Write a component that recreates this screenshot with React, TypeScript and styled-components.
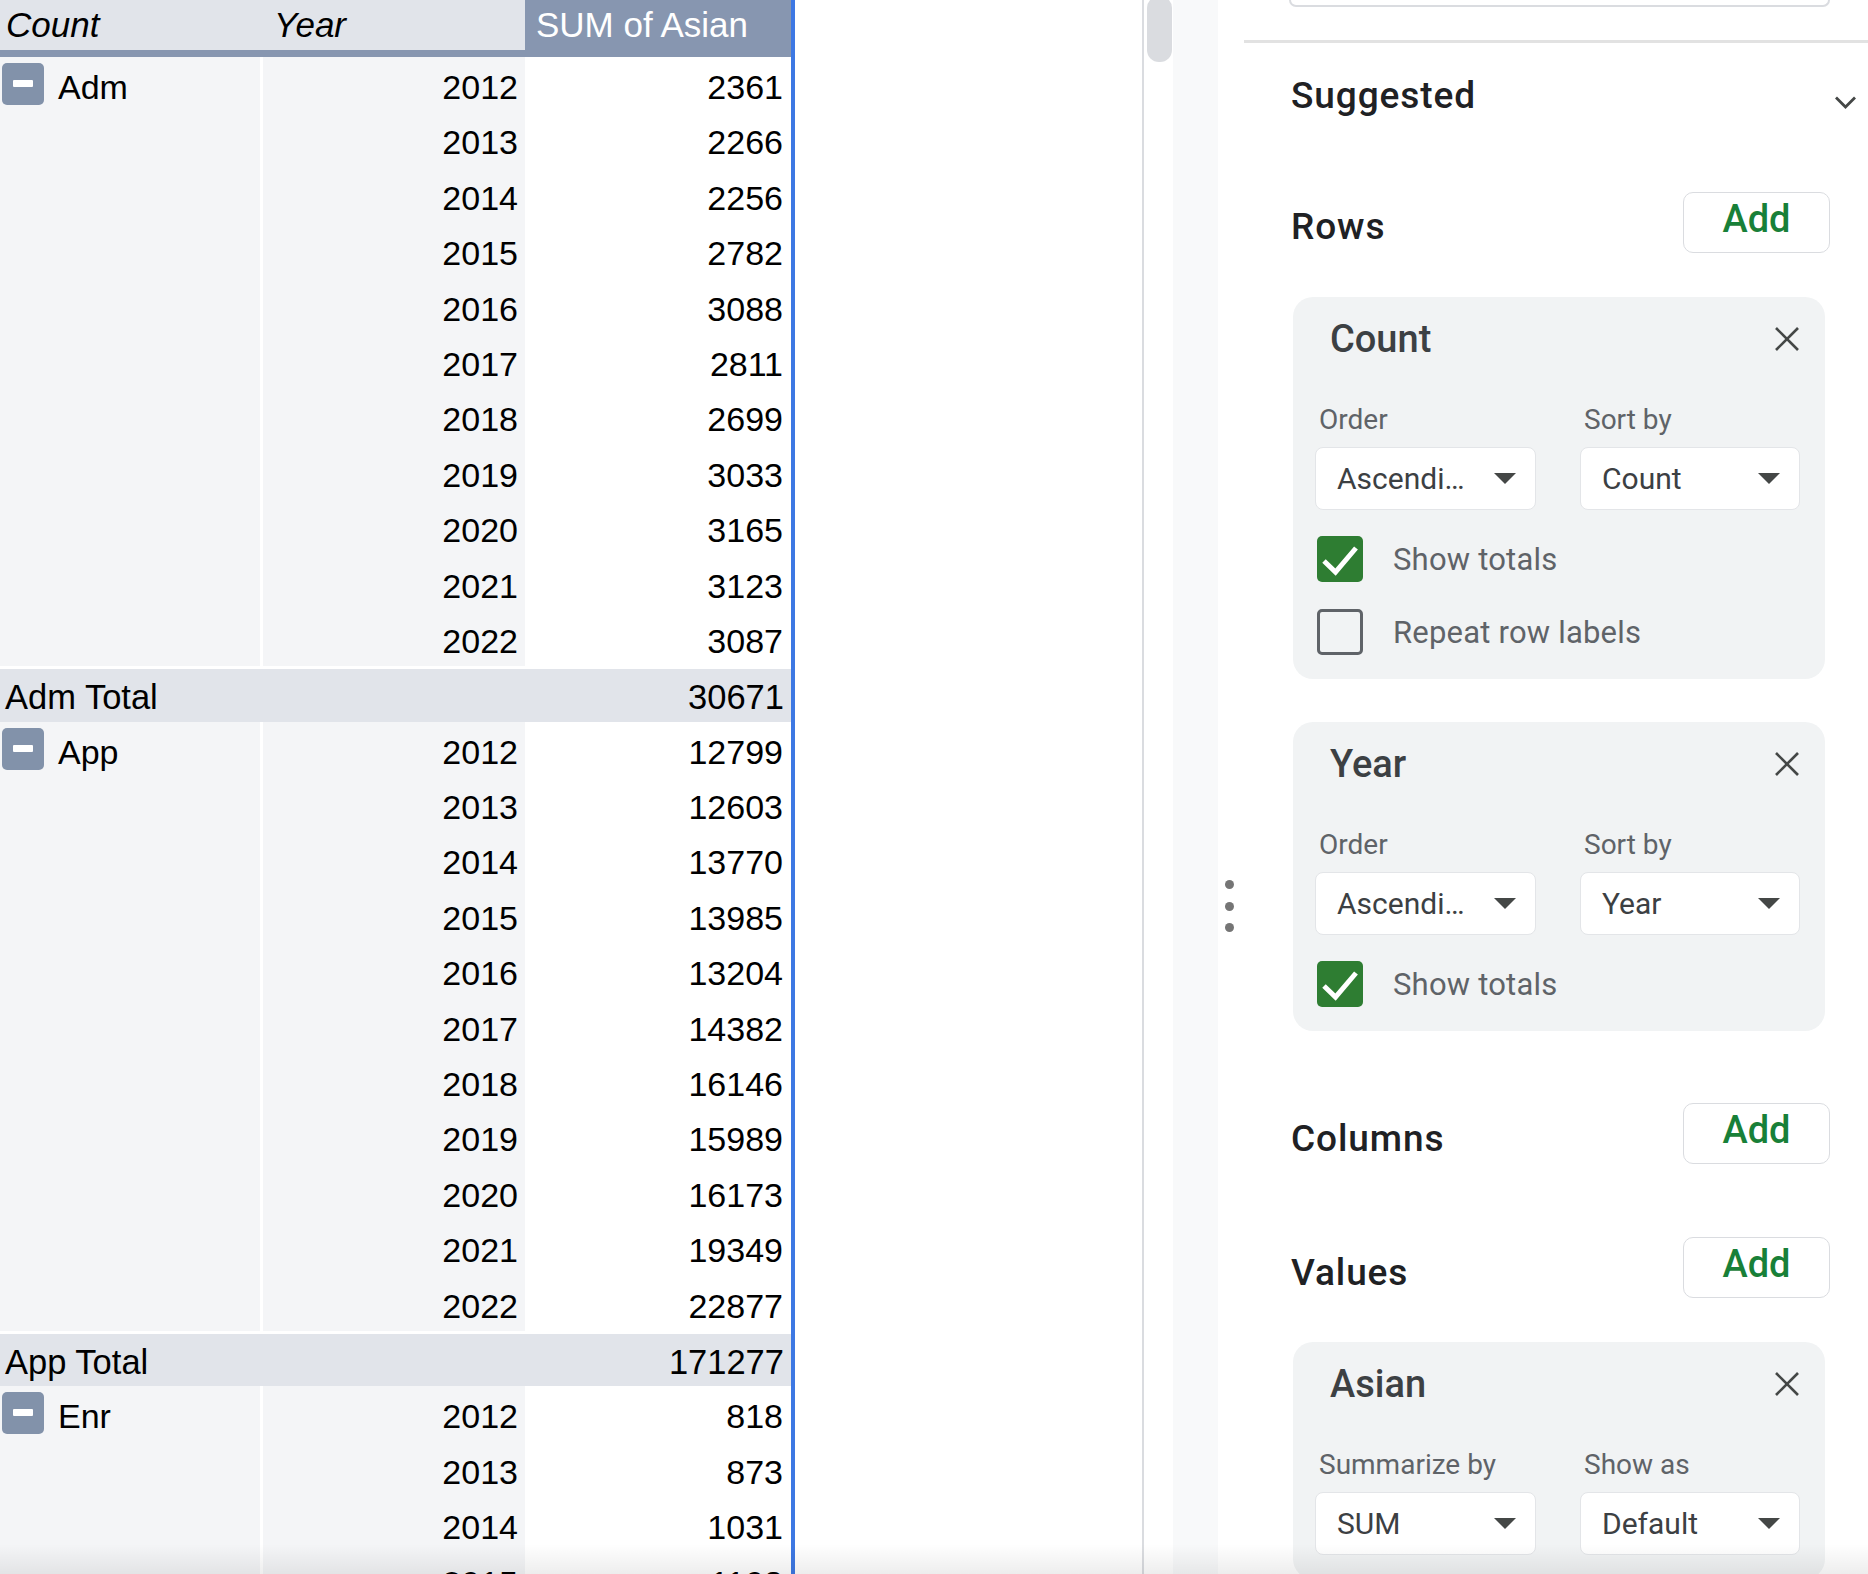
import React from 'react';
import styled, { createGlobalStyle } from 'styled-components';

const GlobalStyle = createGlobalStyle`
  html, body { margin: 0; padding: 0; background: #fff; }
  body { overflow: hidden; }
  *, *::before, *::after { box-sizing: border-box; }
`;

const Page = styled.div`
  position: relative;
  display: flex;
  width: 1868px;
  height: 1574px;
  overflow: hidden;
  background: #fff;
`;

const SheetArea = styled.div`
  width: 1142px;
  flex: none;
  overflow: hidden;
  background: #fff;
`;

const Pivot = styled.div`
  width: 795px;
  border-right: 4px solid #3d78e3;
  font-family: "Liberation Sans", Arial, sans-serif;
  font-size: 34px;
  color: #000;
`;

const HeaderRow = styled.div`
  display: grid;
  grid-template-columns: 263px 262px 266px;
  height: 57px;
  border-bottom: 7px solid #8796b0;
`;

const HeaderCell = styled.div<{ $accent?: boolean; $pad: number }>`
  background: ${(p) => (p.$accent ? '#8796b0' : '#e1e4ea')};
  color: ${(p) => (p.$accent ? '#fff' : '#000')};
  font-style: ${(p) => (p.$accent ? 'normal' : 'italic')};
  font-size: 35px;
  line-height: 50px;
  padding-left: ${(p) => p.$pad}px;
  white-space: nowrap;
`;

const DataRow = styled.div`
  display: grid;
  grid-template-columns: 263px 262px 266px;
  height: 55.4px;
`;

const GroupCell = styled.div`
  display: flex;
  align-items: flex-start;
  background: #f4f5f7;
  border-right: 3px solid #fff;
`;

const ToggleBox = styled.span`
  display: flex;
  align-items: center;
  justify-content: center;
  width: 42px;
  height: 42px;
  margin: 6px 0 0 2px;
  border-radius: 5px;
  background: #8292aa;
  flex: none;
`;

const MinusBar = styled.span`
  width: 20px;
  height: 7px;
  border-radius: 1px;
  background: #fff;
  margin-top: -1px;
`;

const GroupName = styled.span`
  margin-left: 14px;
  padding-top: 6px;
  line-height: 49px;
`;

const NumCell = styled.div<{ $white?: boolean; $pr: number }>`
  background: ${(p) => (p.$white ? '#fff' : '#f4f5f7')};
  text-align: right;
  padding: 6px ${(p) => p.$pr}px 0 0;
  line-height: 49px;
  white-space: nowrap;
`;

const TotalRow = styled.div`
  display: flex;
  justify-content: space-between;
  height: 55.4px;
  background: #e1e4ea;
  border-top: 3px solid #fff;
  padding: 5px 7px 0 5px;
  line-height: 47px;
  font-size: 34.5px;
  white-space: nowrap;
`;

const VScroll = styled.div`
  width: 31px;
  flex: none;
  border-left: 2px solid #dadce0;
  padding-left: 3px;
`;

const Thumb = styled.div`
  width: 25px;
  height: 66px;
  margin-top: -4px;
  background: #dadce0;
  border-radius: 12px;
`;

const Band = styled.div`
  width: 45px;
  flex: none;
  background: #f8f9fa;
`;

const Panel = styled.div`
  flex: 1;
  display: flex;
  background: #fff;
  font-family: Roboto, "Noto Sans", Arial, sans-serif;
`;

const Handle = styled.div`
  width: 26px;
  flex: none;
  padding: 880px 0 0 7px;
  display: flex;
  flex-direction: column;
  gap: 12.5px;
`;

const Dot = styled.span`
  width: 9px;
  height: 9px;
  flex: none;
  border-radius: 50%;
  background: #757575;
`;

const Content = styled.div`
  flex: 1;
  display: flex;
  flex-direction: column;
  min-width: 0;
`;

const TopBox = styled.div`
  flex: none;
  margin: 0 40px 0 45px;
  height: 7px;
  border: 2px solid #dadce0;
  border-top: none;
  border-radius: 0 0 10px 10px;
`;

const Divider = styled.div`
  flex: none;
  margin-top: 33px;
  height: 3px;
  background: #e2e2e2;
`;

const Sections = styled.div`
  flex: none;
  display: flex;
  flex-direction: column;
  padding: 0 40px 0 47px;
`;

const SuggestedRow = styled.div`
  flex: none;
  height: 106px;
  display: flex;
  align-items: center;
  justify-content: space-between;
  margin-right: -27px;
`;

const SectionTitle = styled.div<{ $shift?: number }>`
  font-size: 37px;
  font-weight: 500;
  color: #202124;
  line-height: 44px;
  padding-top: ${(p) => p.$shift ?? 0}px;
  letter-spacing: 0.9px;
`;

const ChevronIcon = styled.svg`
  margin-top: 13px;
`;

const SectionRow = styled.div<{ $mt: number }>`
  flex: none;
  display: flex;
  justify-content: space-between;
  align-items: center;
  height: 61px;
  margin-top: ${(p) => p.$mt}px;
`;

const AddButton = styled.button`
  width: 147px;
  height: 61px;
  border: 1px solid #dadce0;
  border-radius: 10px;
  background: #fff;
  font-family: Roboto, "Noto Sans", Arial, sans-serif;
  font-size: 38px;
  font-weight: 500;
  color: #188038;
  padding: 0 0 8px 0;
  display: flex;
  align-items: center;
  justify-content: center;
  line-height: 1;
`;

const Card = styled.div<{ $mt: number }>`
  flex: none;
  margin: ${(p) => p.$mt}px 5px 0 2px;
  background: #f1f3f4;
  border-radius: 20px;
  padding: 18px 25px 24px 22px;
`;

const CardHead = styled.div`
  height: 48px;
  display: flex;
  align-items: center;
  justify-content: space-between;
  padding-left: 15px;
`;

const CardTitle = styled.div`
  font-size: 38px;
  font-weight: 500;
  color: #3c4043;
  line-height: 48px;
`;

const Fields = styled.div`
  display: grid;
  grid-template-columns: 221px 220px;
  column-gap: 44px;
  margin-top: 42px;
`;

const FieldLabel = styled.div`
  font-size: 28px;
  color: #5f6368;
  line-height: 30px;
  padding-left: 4px;
  margin-bottom: 12px;
  white-space: nowrap;
`;

const Select = styled.div`
  height: 63px;
  background: #fff;
  border: 1px solid #e3e5e8;
  border-radius: 8px;
  display: flex;
  align-items: center;
  justify-content: space-between;
  padding: 0 19px 0 21px;
  font-size: 30px;
  color: #3c4043;
  white-space: nowrap;
`;

const CheckRow = styled.div<{ $mt: number }>`
  display: flex;
  align-items: center;
  height: 46px;
  margin-top: ${(p) => p.$mt}px;
  padding-left: 2px;
`;

const CheckBox = styled.span<{ $on?: boolean }>`
  width: 46px;
  height: 46px;
  flex: none;
  border-radius: 5px;
  display: flex;
  align-items: center;
  justify-content: center;
  background: ${(p) => (p.$on ? '#2e7d32' : 'transparent')};
  border: ${(p) => (p.$on ? 'none' : '3.5px solid #5f6368')};
`;

const CheckLabel = styled.span`
  margin-left: 30px;
  font-size: 31px;
  letter-spacing: 0.2px;
  color: #5f6368;
  white-space: nowrap;
`;

const BottomShade = styled.div`
  position: absolute;
  left: 0;
  right: 0;
  bottom: 0;
  height: 30px;
  pointer-events: none;
  background: linear-gradient(to bottom, rgba(0, 0, 0, 0), rgba(0, 0, 0, 0.07));
`;

type Group = { name: string; values: number[]; total?: number };

const years = [2012, 2013, 2014, 2015, 2016, 2017, 2018, 2019, 2020, 2021, 2022];

const groups: Group[] = [
  { name: 'Adm', values: [2361, 2266, 2256, 2782, 3088, 2811, 2699, 3033, 3165, 3123, 3087], total: 30671 },
  { name: 'App', values: [12799, 12603, 13770, 13985, 13204, 14382, 16146, 15989, 16173, 19349, 22877], total: 171277 },
  { name: 'Enr', values: [818, 873, 1031, 1103, 1152, 1096] },
];

const Chevron = () => (
  <ChevronIcon width="23" height="15" viewBox="0 0 23 15">
    <polyline points="2,2.5 11.5,12 21,2.5" fill="none" stroke="#444746" strokeWidth="2.8" />
  </ChevronIcon>
);

const CloseIcon = () => (
  <svg width="26" height="26" viewBox="0 0 26 26">
    <line x1="2" y1="2" x2="24" y2="24" stroke="#444746" strokeWidth="2.6" />
    <line x1="24" y1="2" x2="2" y2="24" stroke="#444746" strokeWidth="2.6" />
  </svg>
);

const Caret = () => (
  <svg width="22" height="11" viewBox="0 0 22 11">
    <polygon points="0,0 22,0 11,11" fill="#444746" />
  </svg>
);

const Tick = () => (
  <svg width="46" height="46" viewBox="0 0 46 46">
    <polyline points="7,25 18.5,36 39,12" fill="none" stroke="#fff" strokeWidth="5" />
  </svg>
);

const Dropdown = ({ label, value }: { label: string; value: string }) => (
  <div>
    <FieldLabel>{label}</FieldLabel>
    <Select>
      <span>{value}</span>
      <Caret />
    </Select>
  </div>
);

const Check = ({ on, label, mt }: { on?: boolean; label: string; mt: number }) => (
  <CheckRow $mt={mt}>
    <CheckBox $on={on}>{on && <Tick />}</CheckBox>
    <CheckLabel>{label}</CheckLabel>
  </CheckRow>
);

export default function App() {
  return (
    <>
      <GlobalStyle />
      <Page>
        <SheetArea>
          <Pivot>
            <HeaderRow>
              <HeaderCell $pad={6}>Count</HeaderCell>
              <HeaderCell $pad={11}>Year</HeaderCell>
              <HeaderCell $pad={11} $accent>
                SUM of Asian
              </HeaderCell>
            </HeaderRow>
            {groups.map((g) => (
              <React.Fragment key={g.name}>
                {g.values.map((v, i) => (
                  <DataRow key={i}>
                    <GroupCell>
                      {i === 0 && (
                        <>
                          <ToggleBox>
                            <MinusBar />
                          </ToggleBox>
                          <GroupName>{g.name}</GroupName>
                        </>
                      )}
                    </GroupCell>
                    <NumCell $pr={7}>{years[i]}</NumCell>
                    <NumCell $pr={8} $white>
                      {v}
                    </NumCell>
                  </DataRow>
                ))}
                {g.total !== undefined && (
                  <TotalRow>
                    <span>{g.name} Total</span>
                    <span>{g.total}</span>
                  </TotalRow>
                )}
              </React.Fragment>
            ))}
          </Pivot>
        </SheetArea>
        <VScroll>
          <Thumb />
        </VScroll>
        <Band />
        <Panel>
          <Handle>
            <Dot />
            <Dot />
            <Dot />
          </Handle>
          <Content>
            <TopBox />
            <Divider />
            <Sections>
              <SuggestedRow>
                <SectionTitle>Suggested</SectionTitle>
                <Chevron />
              </SuggestedRow>

              <SectionRow $mt={43}>
                <SectionTitle $shift={9}>Rows</SectionTitle>
                <AddButton>Add</AddButton>
              </SectionRow>

              <Card $mt={44}>
                <CardHead>
                  <CardTitle>Count</CardTitle>
                  <CloseIcon />
                </CardHead>
                <Fields>
                  <Dropdown label="Order" value="Ascendi…" />
                  <Dropdown label="Sort by" value="Count" />
                </Fields>
                <Check on label="Show totals" mt={26} />
                <Check label="Repeat row labels" mt={27} />
              </Card>

              <Card $mt={43}>
                <CardHead>
                  <CardTitle>Year</CardTitle>
                  <CloseIcon />
                </CardHead>
                <Fields>
                  <Dropdown label="Order" value="Ascendi…" />
                  <Dropdown label="Sort by" value="Year" />
                </Fields>
                <Check on label="Show totals" mt={26} />
              </Card>

              <SectionRow $mt={72}>
                <SectionTitle $shift={10}>Columns</SectionTitle>
                <AddButton>Add</AddButton>
              </SectionRow>

              <SectionRow $mt={73}>
                <SectionTitle $shift={10}>Values</SectionTitle>
                <AddButton>Add</AddButton>
              </SectionRow>

              <Card $mt={44}>
                <CardHead>
                  <CardTitle>Asian</CardTitle>
                  <CloseIcon />
                </CardHead>
                <Fields>
                  <Dropdown label="Summarize by" value="SUM" />
                  <Dropdown label="Show as" value="Default" />
                </Fields>
              </Card>
            </Sections>
          </Content>
        </Panel>
        <BottomShade />
      </Page>
    </>
  );
}
